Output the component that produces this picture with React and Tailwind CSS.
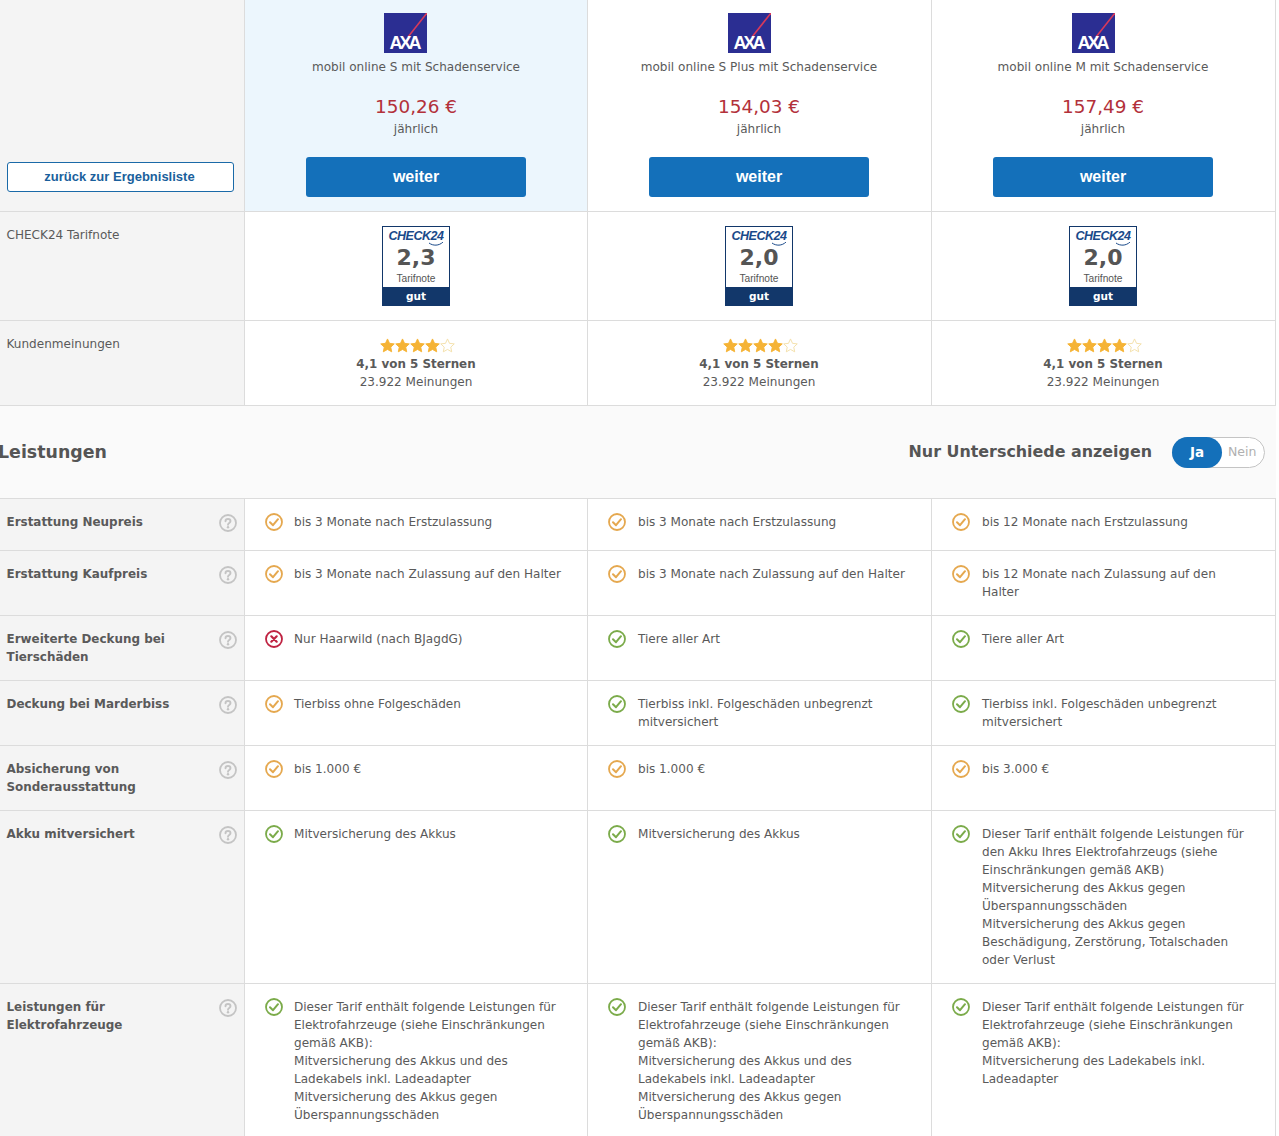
const tariffs = [
  { name: "mobil online S mit Schadenservice", price: "150,26 €", note: "2,3", highlight: true },
  { name: "mobil online S Plus mit Schadenservice", price: "154,03 €", note: "2,0" },
  { name: "mobil online M mit Schadenservice", price: "157,49 €", note: "2,0" },
];

const rows = [
  {
    label: ["Erstattung Neupreis"],
    minH: "min-h-[52px]",
    cells: [
      ["warn", ["bis 3 Monate nach Erstzulassung"]],
      ["warn", ["bis 3 Monate nach Erstzulassung"]],
      ["warn", ["bis 12 Monate nach Erstzulassung"]],
    ],
  },
  {
    label: ["Erstattung Kaufpreis"],
    minH: "min-h-[65px]",
    cells: [
      ["warn", ["bis 3 Monate nach Zulassung auf den Halter"]],
      ["warn", ["bis 3 Monate nach Zulassung auf den Halter"]],
      ["warn", ["bis 12 Monate nach Zulassung auf den", "Halter"]],
    ],
  },
  {
    label: ["Erweiterte Deckung bei", "Tierschäden"],
    minH: "min-h-[65px]",
    cells: [
      ["no", ["Nur Haarwild (nach BJagdG)"]],
      ["ok", ["Tiere aller Art"]],
      ["ok", ["Tiere aller Art"]],
    ],
  },
  {
    label: ["Deckung bei Marderbiss"],
    minH: "min-h-[65px]",
    cells: [
      ["warn", ["Tierbiss ohne Folgeschäden"]],
      ["ok", ["Tierbiss inkl. Folgeschäden unbegrenzt", "mitversichert"]],
      ["ok", ["Tierbiss inkl. Folgeschäden unbegrenzt", "mitversichert"]],
    ],
  },
  {
    label: ["Absicherung von", "Sonderausstattung"],
    minH: "min-h-[65px]",
    cells: [
      ["warn", ["bis 1.000 €"]],
      ["warn", ["bis 1.000 €"]],
      ["warn", ["bis 3.000 €"]],
    ],
  },
  {
    label: ["Akku mitversichert"],
    minH: "min-h-[173px]",
    cells: [
      ["ok", ["Mitversicherung des Akkus"]],
      ["ok", ["Mitversicherung des Akkus"]],
      [
        "ok",
        [
          "Dieser Tarif enthält folgende Leistungen für",
          "den Akku Ihres Elektrofahrzeugs (siehe",
          "Einschränkungen gemäß AKB)",
          "Mitversicherung des Akkus gegen",
          "Überspannungsschäden",
          "Mitversicherung des Akkus gegen",
          "Beschädigung, Zerstörung, Totalschaden",
          "oder Verlust",
        ],
      ],
    ],
  },
  {
    label: ["Leistungen für", "Elektrofahrzeuge"],
    minH: "min-h-[160px]",
    cells: [
      [
        "ok",
        [
          "Dieser Tarif enthält folgende Leistungen für",
          "Elektrofahrzeuge (siehe Einschränkungen",
          "gemäß AKB):",
          "Mitversicherung des Akkus und des",
          "Ladekabels inkl. Ladeadapter",
          "Mitversicherung des Akkus gegen",
          "Überspannungsschäden",
        ],
      ],
      [
        "ok",
        [
          "Dieser Tarif enthält folgende Leistungen für",
          "Elektrofahrzeuge (siehe Einschränkungen",
          "gemäß AKB):",
          "Mitversicherung des Akkus und des",
          "Ladekabels inkl. Ladeadapter",
          "Mitversicherung des Akkus gegen",
          "Überspannungsschäden",
        ],
      ],
      [
        "ok",
        [
          "Dieser Tarif enthält folgende Leistungen für",
          "Elektrofahrzeuge (siehe Einschränkungen",
          "gemäß AKB):",
          "Mitversicherung des Ladekabels inkl.",
          "Ladeadapter",
        ],
      ],
    ],
  },
];

function AxaLogo({ first }) {
  return (
    <svg width="43" height="40" viewBox="0 0 43 40" className={`block ${first ? "-ml-[21px]" : "-ml-[20px]"}`}>
      <rect width="43" height="40" fill="#2b2e92" />
      <path d="M43 0 L24 24" stroke="#d8395a" strokeWidth="1.6" fill="none" />
      <text
        x="20"
        y="36"
        textAnchor="middle"
        fill="#fff"
        fontFamily="Liberation Sans"
        fontWeight="700"
        fontSize="18"
        letterSpacing="-3"
      >
        AXA
      </text>
    </svg>
  );
}

function Badge({ note }) {
  return (
    <div className="w-[68px] h-[80px] border border-[#12376a] bg-white flex flex-col items-center">
      <div className="h-[17px] mt-[1px] relative text-[12.5px] leading-[17px] font-bold italic text-[#1a4a8a] font-['Liberation_Sans'] tracking-[-0.5px]">
        CHECK24
        <svg width="16" height="4" viewBox="0 0 16 4" fill="none" className="absolute right-[-1px] bottom-[-1px]">
          <path d="M1 1c4 3 10 3 14-1" stroke="#1a4a8a" strokeWidth="1" />
        </svg>
      </div>
      <div className="text-[22px] leading-[26px] font-bold text-[#555] font-['DejaVu_Sans']">{note}</div>
      <div className="text-[10.2px] leading-[12px] text-[#555] font-['Liberation_Sans'] mt-[2px]">Tarifnote</div>
      <div className="mt-auto w-full h-[18px] bg-[#12376a] text-white text-[10.5px] leading-[18px] font-bold text-center">
        gut
      </div>
    </div>
  );
}

function Star({ filled }) {
  return (
    <svg width="15" height="15" viewBox="0 0 24 24" className="block">
      <path
        d="M12 1.5l3.2 7 7.6.9-5.6 5.2 1.5 7.5L12 18.3l-6.7 3.8 1.5-7.5L1.200 9.400l7.600-.9z"
        fill={filled ? "#f5b335" : "#fff"}
        stroke={filled ? "#f5b335" : "#f3dfa8"}
        strokeWidth="1.5"
        strokeLinejoin="round"
      />
    </svg>
  );
}

function StatusIcon({ type }) {
  const color = type === "ok" ? "#7bab4a" : type === "warn" ? "#e5a84f" : "#bf2241";
  return (
    <svg width="18" height="18" viewBox="0 0 18 18" fill="none" className="block shrink-0">
      <circle cx="9" cy="9" r="8" stroke={color} strokeWidth="1.800" />
      {type === "no" ? (
        <path d="M6.300 6.300l5.400 5.400M11.700 6.300l-5.400 5.400" stroke={color} strokeWidth="2.200" strokeLinecap="round" />
      ) : (
        <path d="M5 9.200l3 3 5-6" stroke={color} strokeWidth="2" strokeLinecap="round" strokeLinejoin="round" />
      )}
    </svg>
  );
}

function HelpIcon() {
  return (
    <svg width="18" height="18" viewBox="0 0 18 18" fill="none" className="block shrink-0 mt-[1px]">
      <circle cx="9" cy="9" r="8" stroke="#c4c4c4" strokeWidth="1.800" />
      <path
        d="M6.500 7.200C6.500 5.800 7.600 5 9 5s2.500.9 2.500 2.100c0 1.900-2.500 1.900-2.500 3.700"
        stroke="#c4c4c4"
        strokeWidth="1.900"
        strokeLinecap="round"
      />
      <circle cx="9" cy="13.200" r="1.200" fill="#c4c4c4" />
    </svg>
  );
}

export default function App() {
  return (
    <div className="w-[1279px] h-[1136px] overflow-hidden bg-white font-['DejaVu_Sans',sans-serif] text-[12.05px] leading-[18px] text-[#5a5a5a]">
      <div className="w-[1276px] grid grid-cols-[245px_343px_344px_344px]">
        {/* top row with tariffs */}
        <div className="h-[212px] bg-[#f4f4f4] border-r border-b border-[#dcdcdc] px-[7px] pt-[162px]">
          <button className="w-[227px] h-[30px] pr-[2px] bg-white border border-[#1a6aa8] rounded-[3px] text-[13px] font-bold text-[#1a5f9c] font-['Liberation_Sans']">
            zurück zur Ergebnisliste
          </button>
        </div>
        {tariffs.map((t) => (
          <div
            key={t.name}
            className={`h-[212px] border-r border-b border-[#dcdcdc] flex flex-col items-center pt-[13px] ${
              t.highlight ? "bg-[#ecf6fd]" : "bg-white pr-[1px]"
            }`}
          >
            <AxaLogo first={t.highlight} />
            <div className="mt-[5px]">{t.name}</div>
            <div className="mt-[19px] text-[18.4px] leading-[24px] text-[#b3313a]">{t.price}</div>
            <div className="mt-[1px]">jährlich</div>
            <button className="mt-[19px] w-[220px] h-[40px] bg-[#1470ba] rounded-[3px] text-white font-bold text-[16px] font-['Liberation_Sans']">
              weiter
            </button>
          </div>
        ))}

        {/* Tarifnote */}
        <div className="h-[109px] bg-[#f4f4f4] border-r border-b border-[#dcdcdc] pl-[6.5px] pt-[14px]">CHECK24 Tarifnote</div>
        {tariffs.map((t) => (
          <div
            key={t.name}
            className={`h-[109px] border-r border-b border-[#dcdcdc] flex justify-center pt-[14px] ${t.highlight ? "" : "pr-[1px]"}`}
          >
            <Badge note={t.note} />
          </div>
        ))}

        {/* Kundenmeinungen */}
        <div className="h-[85px] bg-[#f4f4f4] border-r border-b border-[#dcdcdc] pl-[6.5px] pt-[14px]">Kundenmeinungen</div>
        {tariffs.map((t) => (
          <div
            key={t.name}
            className={`h-[85px] border-r border-b border-[#dcdcdc] flex flex-col items-center pt-[17px] ${t.highlight ? "" : "pr-[1px]"}`}
          >
            <div className="flex h-[15px] ml-[2px]">
              {[1, 2, 3, 4, 5].map((n) => (
                <Star key={n} filled={n < 5} />
              ))}
            </div>
            <div className="mt-[2px] text-[11.9px] font-bold">4,1 von 5 Sternen</div>
            <div>23.922 Meinungen</div>
          </div>
        ))}

        {/* Leistungen header */}
        <div className="col-span-4 h-[93px] bg-[#fafafa] border-b border-[#dcdcdc] flex items-center pr-[11px]">
          <h2 className="ml-[-2px] text-[17.4px] font-bold text-[#555]">Leistungen</h2>
          <div className="ml-auto text-[15.9px] font-bold text-[#555]">Nur Unterschiede anzeigen</div>
          <div className="ml-[20px] w-[93px] h-[31px] rounded-full border border-[#c4c4c4] bg-white flex items-center">
            <div className="w-[50px] h-[31px] -ml-px rounded-full bg-[#1470ba] text-white text-[13.5px] font-bold text-center leading-[31px]">Ja</div>
            <div className="ml-[6px] text-[12.5px] text-[#b0b0b0]">Nein</div>
          </div>
        </div>

        {/* Leistungen rows */}
        {rows.map((row) => (
          <div key={row.label[0]} className="contents">
            <div className={`${row.minH} bg-[#f4f4f4] border-r border-b border-[#dcdcdc] pl-[6.5px] pr-[7px] pt-[14px] flex justify-between`}>
              <div className="text-[11.95px] font-bold">
                {row.label.map((l) => (
                  <div key={l}>{l}</div>
                ))}
              </div>
              <HelpIcon />
            </div>
            {row.cells.map(([type, lines], i) => (
              <div
                key={i}
                className={`${row.minH} border-r border-b border-[#dcdcdc] pl-[20px] pt-[14px] flex ${i === 0 ? "gap-[11px]" : "gap-[12px]"}`}
              >
                <StatusIcon type={type} />
                <div>
                  {lines.map((l, j) => (
                    <div key={j}>{l}</div>
                  ))}
                </div>
              </div>
            ))}
          </div>
        ))}
      </div>
    </div>
  );
}
